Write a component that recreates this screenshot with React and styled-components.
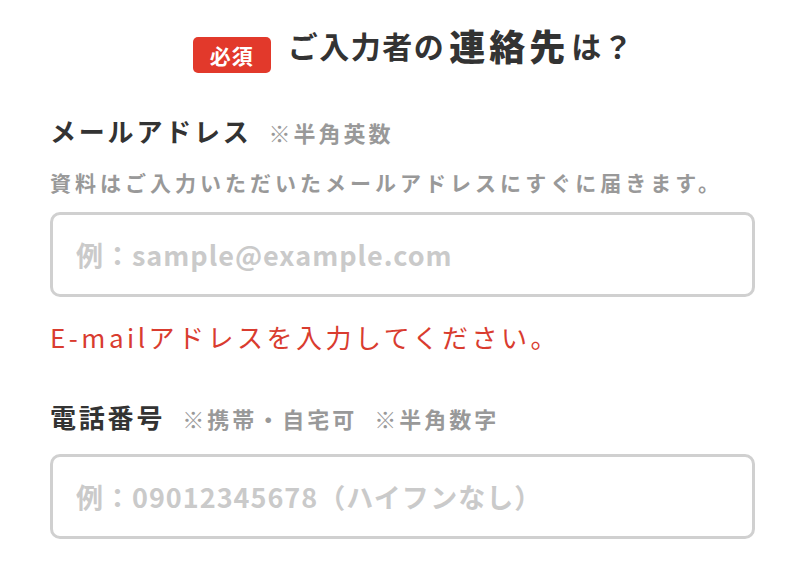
import React from "react";
import styled, { createGlobalStyle } from "styled-components";

const GlobalStyle = createGlobalStyle`
  body {
    margin: 0;
    background: #fff;
    font-family: "Noto Sans CJK JP", "Noto Sans", sans-serif;
    color: #333;
  }
`

const App = () => {
  return (
    <>
      <GlobalStyle />
      <Page>
        <Header>
          <Badge>必須</Badge>
          <Title>
            <span>ご入力者の</span>
            <strong>連絡先</strong>
            <span>は？</span>
          </Title>
        </Header>

        <Field $top={45}>
          <LabelRow>
            <Label>メールアドレス</Label>
            <Note>※半角英数</Note>
          </LabelRow>
          <Desc>資料はご入力いただいたメールアドレスにすぐに届きます。</Desc>
          <Input type="email" placeholder="例：sample@example.com" $top={19} />
          <Error>E-mailアドレスを入力してください。</Error>
        </Field>

        <Field $top={54}>
          <LabelRow>
            <Label>電話番号</Label>
            <Note>※携帯・自宅可</Note>
            <Note>※半角数字</Note>
          </LabelRow>
          <Input type="tel" placeholder="例：09012345678（ハイフンなし）" $top={24} />
        </Field>
      </Page>
    </>
  )
}

const Page = styled.div`
  padding: 29px 45px 0 50px;
`
const Header = styled.div`
  display: flex;
  justify-content: center;
  align-items: flex-start;
  gap: 17px;
  padding-left: 22px;
`
const Badge = styled.span`
  margin-top: 8px;
  width: 78px;
  height: 36px;
  display: flex;
  align-items: center;
  justify-content: center;
  background: #e2392b;
  border-radius: 5px;
  color: #fff;
  font-size: 21px;
  font-weight: bold;
  letter-spacing: 1px;
  line-height: 1;
`
const Title = styled.h2`
  margin: -2px 0 0;
  display: flex;
  align-items: center;
  height: 35px;
  font-size: 30px;
  font-weight: bold;
  letter-spacing: 1.5px;
  line-height: 1;
  color: #333;

  strong {
    font-size: 36px;
    letter-spacing: 4px;
    margin: 0 2px 0 4px;
  }
`
const Field = styled.div`
  margin-top: ${p => p.$top}px;
`
const LabelRow = styled.div`
  display: flex;
  align-items: baseline;
  gap: 17px;
  line-height: 1;
`
const Label = styled.span`
  font-size: 26px;
  font-weight: bold;
  letter-spacing: 2.8px;
  color: #333;
`
const Note = styled.span`
  font-size: 22px;
  font-weight: bold;
  letter-spacing: 3px;
  color: #999;
`
const Desc = styled.p`
  margin: 28px 0 0;
  font-size: 21px;
  font-weight: bold;
  letter-spacing: 4px;
  line-height: 1;
  color: #999;
`
const Input = styled.input`
  display: block;
  box-sizing: border-box;
  width: 100%;
  height: 85px;
  margin-top: ${p => p.$top}px;
  padding: 0 23px;
  border: 3px solid #d0d0d0;
  border-radius: 10px;
  background: #fff;
  font-family: "Noto Sans CJK JP", "Noto Sans", sans-serif;
  font-size: 27px;
  font-weight: bold;
  letter-spacing: 1px;
  color: #333;
  outline: none;

  &::placeholder {
    color: #cacaca;
  }
`
const Error = styled.p`
  margin: 27px 0 0;
  font-size: 26px;
  letter-spacing: 3.5px;
  line-height: 1;
  color: #d93c2f;
`

export default App
